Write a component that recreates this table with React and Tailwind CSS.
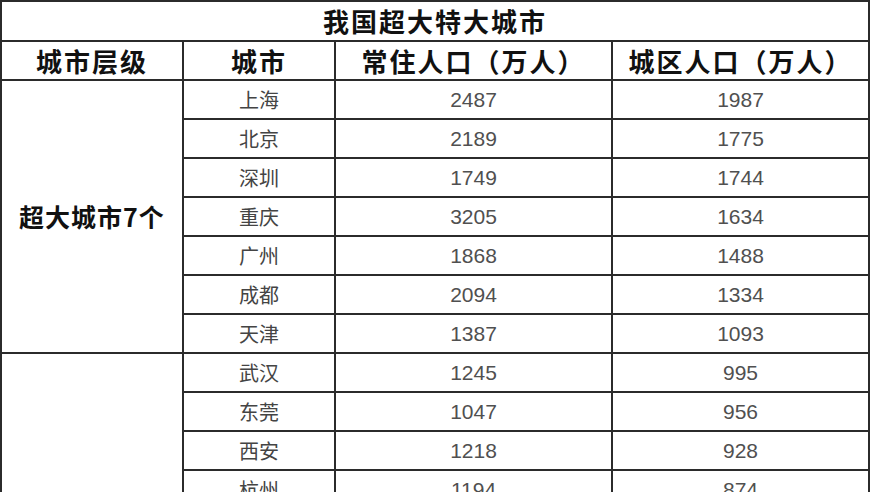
const superCities = [
  ['上海', 2487, 1987],
  ['北京', 2189, 1775],
  ['深圳', 1749, 1744],
  ['重庆', 3205, 1634],
  ['广州', 1868, 1488],
  ['成都', 2094, 1334],
  ['天津', 1387, 1093],
];

const bigCities = [
  ['武汉', 1245, 995],
  ['东莞', 1047, 956],
  ['西安', 1218, 928],
  ['杭州', 1194, 874],
  ['佛山', 950, 854],
  ['南京', 931, 791],
  ['沈阳', 907, 707],
  ['青岛', 1007, 601],
  ['济南', 920, 588],
  ['长沙', 1005, 555],
  ['哈尔滨', 1001, 550],
  ['郑州', 1260, 534],
  ['昆明', 846, 534],
  ['大连', 745, 521],
];

const cjk = "font-['Noto_Sans_CJK_SC',sans-serif]";
const num = "font-['Liberation_Sans','Noto_Sans_CJK_SC',sans-serif]";
const cell = 'border-2 border-[#2b2b2b] text-center p-0';
const head = `${cell} ${cjk} text-[26px] font-bold tracking-[2px] text-[#111]`;

function Rows({ label, rows }) {
  return rows.map(([city, pop, urban], i) => (
    <tr key={city} className="h-[39px]">
      {i === 0 && (
        <td rowSpan={rows.length} className={`${cell} ${cjk} text-[25px] font-bold tracking-[1px] text-[#111]`}>
          {label}
        </td>
      )}
      <td className={`${cell} ${cjk} text-[20px] text-[#444]`}>{city}</td>
      <td className={`${cell} ${num} text-[21px] text-[#505050]`}>{pop}</td>
      <td className={`${cell} ${num} text-[21px] text-[#505050]`}>{urban}</td>
    </tr>
  ));
}

export default function App() {
  return (
    <div className="bg-white">
      <table className="w-[868px] table-fixed border-collapse leading-none">
        <colgroup>
          <col className="w-[182px]" />
          <col className="w-[152px]" />
          <col className="w-[277px]" />
          <col className="w-[257px]" />
        </colgroup>
        <thead>
          <tr className="h-[40px]">
            <th colSpan={4} className={head}>我国超大特大城市</th>
          </tr>
          <tr className="h-[39px]">
            <th className={head}>城市层级</th>
            <th className={head}>城市</th>
            <th className={head}>常住人口（万人）</th>
            <th className={head}>城区人口（万人）</th>
          </tr>
        </thead>
        <tbody>
          <Rows label="超大城市7个" rows={superCities} />
          <Rows label="特大城市14个" rows={bigCities} />
        </tbody>
      </table>
    </div>
  );
}
